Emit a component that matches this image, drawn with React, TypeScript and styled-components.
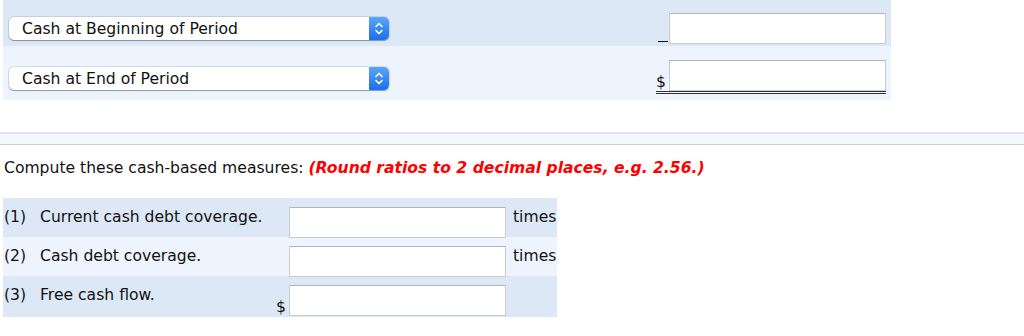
import React from 'react';
import styled, { createGlobalStyle } from 'styled-components';

const GlobalStyle = createGlobalStyle`
  body {
    margin: 0;
    background: #fff;
    font-family: "DejaVu Sans", Verdana, sans-serif;
    font-size: 15.6px;
    color: #111;
  }
`;

const ROW_DARK = '#dde8f7';
const ROW_LIGHT = '#eef4fd';

type Shade = 'dark' | 'light';

const TopPanel = styled.div`
  margin-left: 3px;
  width: 888px;
`;

const TopRow = styled.div<{ $shade: Shade; $height: number; $pad: number }>`
  display: flex;
  justify-content: space-between;
  align-items: flex-start;
  box-sizing: border-box;
  height: ${p => p.$height}px;
  padding: ${p => p.$pad}px 5px 0 6px;
  background: ${p => (p.$shade === 'dark' ? ROW_DARK : ROW_LIGHT)};
`;

const SelectBox = styled.div<{ $offset: number }>`
  display: flex;
  align-items: center;
  justify-content: space-between;
  width: 380px;
  height: 23px;
  margin-top: ${p => p.$offset}px;
  padding-left: 13px;
  box-sizing: border-box;
  background: #fff;
  border-radius: 5px;
  box-shadow: 0 0 0 1px rgba(0, 0, 0, 0.1), 0 1px 1px rgba(0, 0, 0, 0.3);
  line-height: 23px;
`;

const SelectLabel = styled.span`
  padding-top: 2px;
`;

const Stepper = styled.div`
  width: 20px;
  height: 23px;
  border-radius: 0 5px 5px 0;
  background: linear-gradient(#5aa6fa, #1b6ef0);
  display: flex;
  align-items: center;
  justify-content: center;
`;

const AnswerCell = styled.div<{ $double?: boolean }>`
  display: flex;
  align-items: flex-end;
  border-bottom: ${p => (p.$double ? '3px double #333' : 'none')};
`;

const Prefix = styled.span`
  width: 13px;
  line-height: 17px;
  text-align: left;
`;

const Blank = styled.span`
  width: 10px;
  margin-right: 1px;
  margin-bottom: 2px;
  border-bottom: 1.5px solid #111;
`;

const AmountInput = styled.input`
  width: 217px;
  height: 31px;
  box-sizing: border-box;
  margin: 0;
  border: 1px solid #cbcbcb;
  border-top-color: #b4b4b4;
  background: #fff;
  outline: none;
  font: inherit;
`;

const Divider = styled.div`
  margin-top: 32px;
  height: 10px;
  border-top: 2px solid #e1e4e9;
  border-bottom: 1px solid #c6cfdc;
  background: #f4f7fb;
`;

const Instruction = styled.p`
  margin: 14px 0 0 4px;
  line-height: 19px;
`;

const Note = styled.span`
  color: #ff0000;
  font-weight: bold;
  font-style: italic;
`;

const MeasureTable = styled.div`
  margin: 20px 0 0 3px;
  width: 554px;
`;

const MeasureRow = styled.div<{ $shade: Shade; $height: number }>`
  display: grid;
  grid-template-columns: 37px 236px 13px 217px 51px;
  align-items: start;
  height: ${p => p.$height}px;
  background: ${p => (p.$shade === 'dark' ? ROW_DARK : ROW_LIGHT)};
`;

const Cell = styled.span`
  padding-top: 10px;
  line-height: 19px;
  white-space: nowrap;
`;

const NumCell = styled(Cell)`
  padding-left: 1px;
`;

const UnitCell = styled(Cell)`
  padding-left: 7px;
`;

const Dollar = styled.span`
  align-self: end;
  line-height: 19px;
`;

const RowInput = styled(AmountInput)`
  margin-top: 9px;
`;

const Chevrons = () => (
  <svg width="20" height="23" viewBox="0 0 20 23">
    <path d="M7 9.5 L10 6.5 L13 9.5" fill="none" stroke="#fff" strokeWidth="1.6" strokeLinecap="round" strokeLinejoin="round" />
    <path d="M7 13.5 L10 16.5 L13 13.5" fill="none" stroke="#fff" strokeWidth="1.6" strokeLinecap="round" strokeLinejoin="round" />
  </svg>
);

const measures = [
  { num: '(1)', label: 'Current cash debt coverage.', unit: 'times', dollar: false, shade: 'dark' as Shade, height: 39 },
  { num: '(2)', label: 'Cash debt coverage.', unit: 'times', dollar: false, shade: 'light' as Shade, height: 39 },
  { num: '(3)', label: 'Free cash flow.', unit: '', dollar: true, shade: 'dark' as Shade, height: 41 },
];

export default function App() {
  return (
    <>
      <GlobalStyle />
      <TopPanel>
        <TopRow $shade="dark" $height={46} $pad={13}>
          <SelectBox $offset={4}>
            <SelectLabel>Cash at Beginning of Period</SelectLabel>
            <Stepper><Chevrons /></Stepper>
          </SelectBox>
          <AnswerCell>
            <Blank />
            <AmountInput />
          </AnswerCell>
        </TopRow>
        <TopRow $shade="light" $height={54} $pad={14}>
          <SelectBox $offset={7}>
            <SelectLabel>Cash at End of Period</SelectLabel>
            <Stepper><Chevrons /></Stepper>
          </SelectBox>
          <AnswerCell $double>
            <Prefix>$</Prefix>
            <AmountInput />
          </AnswerCell>
        </TopRow>
      </TopPanel>

      <Divider />

      <Instruction>
        Compute these cash-based measures: <Note>(Round ratios to 2 decimal places, e.g. 2.56.)</Note>
      </Instruction>

      <MeasureTable>
        {measures.map(m => (
          <MeasureRow key={m.num} $shade={m.shade} $height={m.height}>
            <NumCell>{m.num}</NumCell>
            <Cell>{m.label}</Cell>
            {m.dollar ? <Dollar>$</Dollar> : <span />}
            <RowInput />
            <UnitCell>{m.unit}</UnitCell>
          </MeasureRow>
        ))}
      </MeasureTable>
    </>
  );
}
